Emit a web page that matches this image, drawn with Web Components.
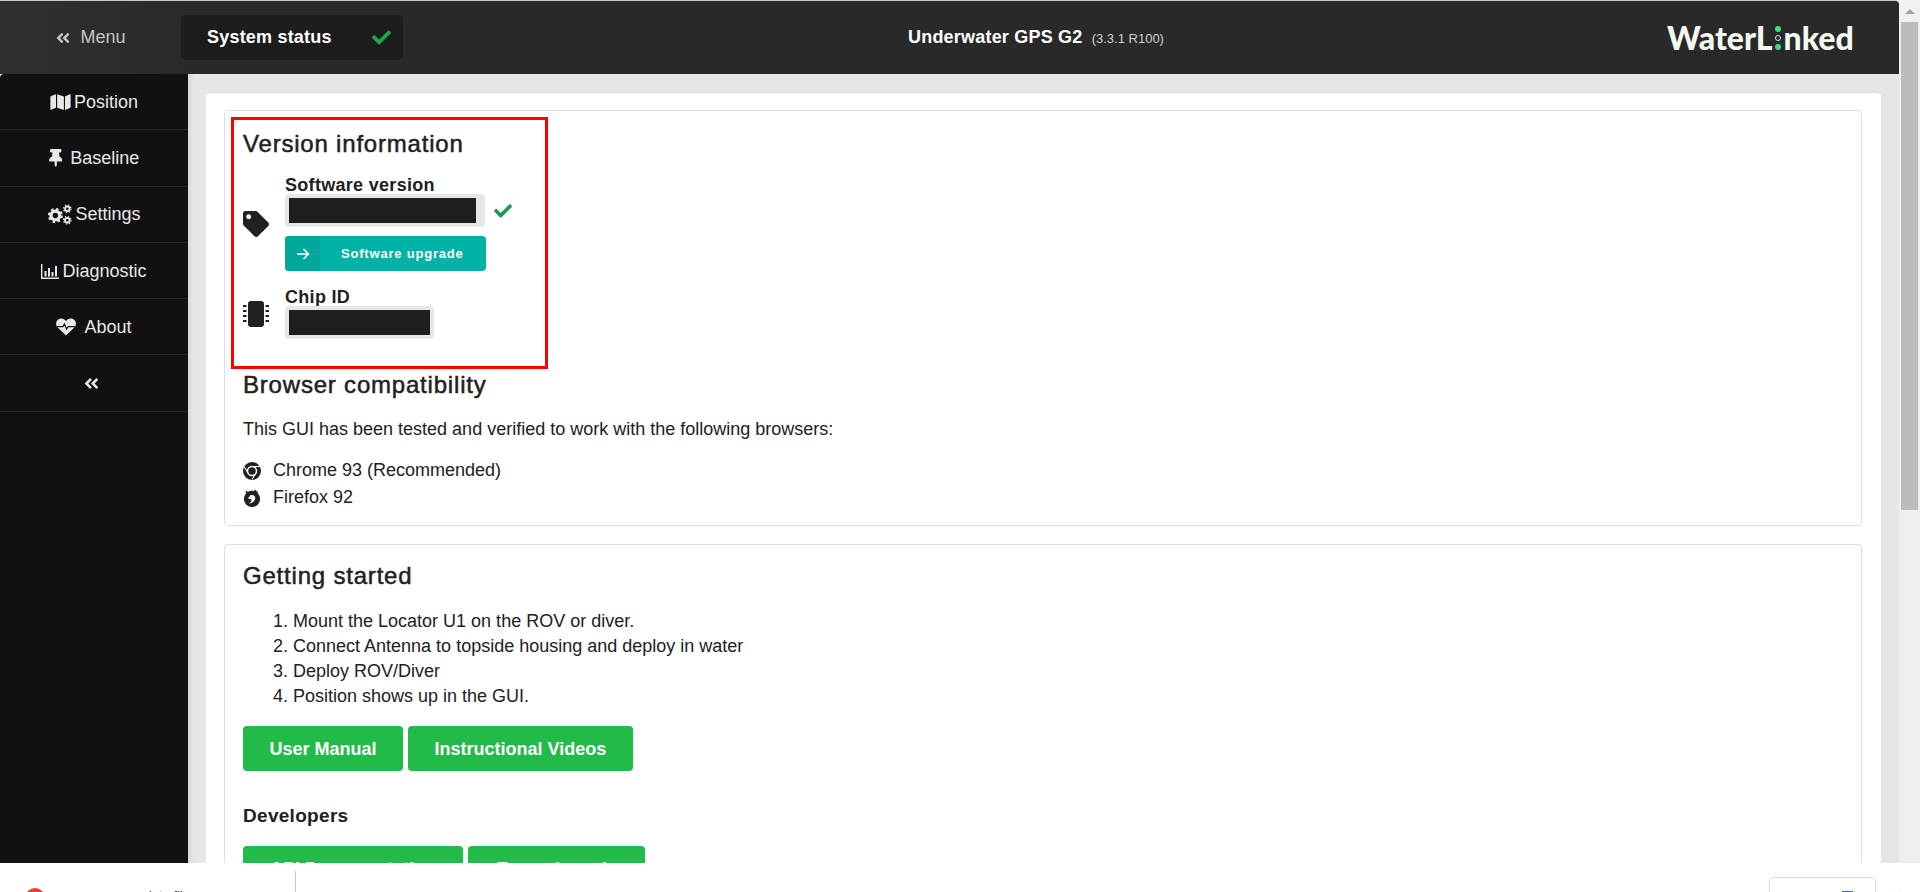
<!DOCTYPE html>
<html>
<head>
<meta charset="utf-8">
<title>Underwater GPS G2</title>
<style>
	html, body { margin: 0; height: 100%; overflow: hidden; background: #fff; }
	body { font-family: "Liberation Sans", Arial, sans-serif; color: #212121; }
</style>
</head>
<body>

<template id="app-shell-tpl">
	<style>
		:host { display: flex; flex-direction: column; width: 1920px; height: 892px; }
		.window { display: flex; height: 863px; flex: none; overflow: hidden; }
		.app { width: 1899px; flex: none; display: flex; flex-direction: column; }
		.body { display: flex; flex: 1; min-height: 0; }
	</style>
	<div class="window">
		<div class="app">
			<slot name="header"></slot>
			<div class="body">
				<slot name="nav"></slot>
				<slot name="main"></slot>
			</div>
		</div>
		<fake-scrollbar></fake-scrollbar>
	</div>
	<slot name="bottom"></slot>
</template>

<template id="top-bar-tpl">
	<style>
		:host { display: flex; align-items: center; height: 73px; flex: none; background: linear-gradient(90deg, #303030 0, #292929 190px); border-top: 1px solid #c8c8c8; border-top-right-radius: 4px; color: #fff; }
		.menu { width: 181px; display: flex; justify-content: center; align-items: center; gap: 9px; color: #c4c4c4; font-size: 18px; }
		.menu svg { width: 16px; height: 16px; fill: #c4c4c4; }
		.status { width: 222px; height: 45px; box-sizing: border-box; border-radius: 5px; background: #1c1c1c; display: flex; align-items: center; justify-content: space-between; padding: 0 12px 0 26px; font-weight: bold; font-size: 18px; letter-spacing: .2px; }
		.status svg { width: 19px; height: 19px; fill: #1fa64e; }
		.title { flex: 1; text-align: center; font-weight: bold; font-size: 18px; letter-spacing: .2px; padding-left: 2px; }
		.title small { font-weight: normal; font-size: 13px; letter-spacing: 0; color: #cfcfcf; margin-left: 4px; }
		.logo { width: 232px; box-sizing: border-box; font-family: Lato, sans-serif; font-weight: 900; font-size: 32px; color: #f2f9ee; display: flex; align-items: center; }
		.dots { display: inline-flex; flex-direction: column; justify-content: space-between; align-items: center; height: 24px; width: 7px; margin: 0 2px; }
		.dots i { width: 6px; height: 6px; border-radius: 50%; background: #3ddc84; }
		.dots i.o { background: none; border: 1px solid #ddd; width: 4px; height: 4px; }
	</style>
	<div class="menu"><svg viewBox="0 0 448 512"><path d="M223.7 239l136-136c9.4-9.4 24.6-9.4 33.9 0l22.6 22.6c9.4 9.4 9.4 24.6 0 33.9L319.9 256l96.4 96.4c9.4 9.4 9.4 24.6 0 33.9L393.7 409c-9.4 9.4-24.6 9.4-33.9 0l-136-136c-9.5-9.4-9.5-24.6-.1-34zm-192 34l136 136c9.4 9.4 24.6 9.4 33.9 0l22.6-22.6c9.4-9.4 9.4-24.6 0-33.9L127.9 256l96.4-96.4c9.4-9.4 9.4-24.6 0-33.9L201.7 103c-9.4-9.4-24.6-9.4-33.9 0l-136 136c-9.5 9.4-9.5 24.6-.1 34z"/></svg>Menu</div>
	<div class="status">System status<svg viewBox="0 0 512 512"><path d="M173.898 439.404l-166.4-166.4c-9.997-9.997-9.997-26.206 0-36.204l36.203-36.204c9.997-9.998 26.207-9.998 36.204 0L192 312.69 432.095 72.596c9.997-9.997 26.207-9.997 36.204 0l36.203 36.204c9.997 9.997 9.997 26.206 0 36.204l-294.4 294.401c-9.998 9.997-26.207 9.997-36.204-.001z"/></svg></div>
	<div class="title">Underwater GPS G2 <small>(3.3.1 R100)</small></div>
	<div class="logo">WaterL<span class="dots"><i></i><i class="o"></i><i></i></span>nked</div>
</template>

<template id="side-nav-tpl">
	<style>
		:host { display: block; width: 188px; flex: none; background: #111; border-top-left-radius: 4px; }
	</style>
	<slot></slot>
</template>

<template id="nav-item-tpl">
	<style>
		:host { display: flex; height: 56.3px; box-sizing: border-box; padding-top: 1px; border-bottom: 1px solid #262626; align-items: center; justify-content: center; gap: 3px; color: #e8e8e8; font-size: 18px; }
		::slotted(svg) { height: 18px; fill: #e8e8e8; }
	</style>
	<slot name="icon"></slot><slot></slot>
</template>

<template id="panel-card-tpl">
	<style>
		:host { display: block; background: #fff; border: 1px solid #dedede; border-radius: 4px; box-sizing: border-box; }
	</style>
	<slot></slot>
</template>

<template id="info-field-tpl">
	<style>
		:host { display: flex; align-items: center; }
		.icon { width: 42px; flex: none; display: flex; }
		.label { font-weight: bold; font-size: 18px; letter-spacing: .3px; line-height: 18px; }
		.row { display: flex; align-items: center; gap: 9px; }
		.box { background: #e6e6e6; border-radius: 4px; height: 33px; box-sizing: border-box; padding: 4px; display: flex; align-items: center; }
		.mask { background: #1e1e1e; height: 100%; }
	</style>
	<div class="icon"><slot name="icon"></slot></div>
	<div>
		<div class="label"><slot name="label"></slot></div>
		<div class="row">
			<div class="box"><div class="mask"></div></div>
			<slot name="state"></slot>
		</div>
		<slot name="action"></slot>
	</div>
</template>

<template id="upgrade-button-tpl">
	<style>
		:host { display: flex; width: 201px; height: 35px; margin-top: 9px; background: #00b3a6; border-radius: 4px; overflow: hidden; color: #fff; font-weight: bold; font-size: 13px; letter-spacing: .8px; align-items: center; }
		.ar { width: 35px; height: 100%; background: #00a89c; display: flex; align-items: center; justify-content: center; }
		.ar svg { width: 16px; height: 16px; }
		.tx { margin-left: 21px; }
	</style>
	<div class="ar"><svg viewBox="0 0 16 16" fill="none" stroke="#fff" stroke-width="1.6"><path d="M2 8h11M8.500 3l5 5-5 5"/></svg></div>
	<div class="tx"><slot></slot></div>
</template>

<template id="green-button-tpl">
	<style>
		:host { display: inline-flex; align-items: center; justify-content: center; height: 45px; box-sizing: border-box; padding-top: 1px; background: #22bb4a; border-radius: 4px; color: #fff; font-weight: bold; font-size: 18px; padding-left: 26.500px; padding-right: 26.500px; }
	</style>
	<slot></slot>
</template>

<template id="fake-scrollbar-tpl">
	<style>
		:host { display: flex; flex-direction: column; width: 21px; flex: none; background: #efefef; }
		.up { height: 22px; display: flex; align-items: center; justify-content: center; background: #f1f1f1; }
		.up i { border: 5px solid transparent; border-top: 0; border-bottom: 5px solid #a3a3a3; }
		.thumb { height: 488px; margin: 0 2px; background: #bcbcbc; }
	</style>
	<div class="up"><i></i></div>
	<div class="thumb"></div>
</template>

<template id="download-bar-tpl">
	<style>
		:host { display: flex; height: 29px; flex: none; background: #fff; overflow: hidden; }
		.item { width: 296px; height: 40px; box-sizing: border-box; display: flex; padding: 17px 0 0 25px; border-right: 1px solid #c8c8c8; margin-top: 8px; }
		.dot { width: 20px; height: 20px; border-radius: 50%; background: #ea4335; flex: none; }
		.name { font-size: 13px; line-height: 15px; color: #333; margin: 0 0 0 85px; }
		.all { margin-left: auto; margin-top: 14px; width: 107px; height: 40px; box-sizing: border-box; border: 1px solid #dadce0; border-radius: 4px; color: #1a73e8; font-size: 13px; line-height: 15px; padding: 11px 0 0 26px; display: flex; gap: 0; }
		.all i { width: 11px; height: 11px; background: #1a73e8; margin: 2px 0 0 -3px; }
		.x { width: 44px; flex: none; text-align: center; color: #888; font-size: 16px; padding-top: 24px; }
	</style>
	<div class="item"><div class="dot"></div><div class="name">update file</div></div>
	<div class="all">Show all<i></i></div>
	<div class="x">&times;</div>
</template>

<script>
	(function() {
		function simple(tag, tplId) {
			class El extends HTMLElement {
				constructor() {
					super();
					const shadow = this.attachShadow({mode: 'open'});
					shadow.appendChild(document.getElementById(tplId).content.cloneNode(true));
				}
			}
			customElements.define(tag, El);
		}

		simple('fake-scrollbar', 'fake-scrollbar-tpl');
		simple('app-shell', 'app-shell-tpl');
		simple('top-bar', 'top-bar-tpl');
		simple('side-nav', 'side-nav-tpl');
		simple('nav-item', 'nav-item-tpl');
		simple('panel-card', 'panel-card-tpl');
		simple('upgrade-button', 'upgrade-button-tpl');
		simple('green-button', 'green-button-tpl');
		simple('download-bar', 'download-bar-tpl');

		class InfoField extends HTMLElement {
			constructor() {
				super();
				const shadow = this.attachShadow({mode: 'open'});
				shadow.appendChild(document.getElementById('info-field-tpl').content.cloneNode(true));
			}

			connectedCallback() {
				// box and redaction widths come from attributes
				this.shadowRoot.querySelector('.box').style.width = this.getAttribute('box') + 'px';
				this.shadowRoot.querySelector('.mask').style.width = this.getAttribute('mask') + 'px';
			}
		}
		customElements.define('info-field', InfoField);

		class MainView extends HTMLElement {
			constructor() {
				super();
				const shadow = this.attachShadow({mode: 'open'});
				shadow.innerHTML = `
					<style>
						:host { display: block; flex: 1; min-width: 0; overflow: hidden; background: linear-gradient(90deg, #d8d8d8 0, #e6e6e6 6px); padding: 18px 18px 0; box-sizing: border-box; }
						.outer { background: #fff; border-top: 1px solid #dedede; border-radius: 4px 4px 0 0; padding: 17px 19px 0 18px; height: 900px; box-sizing: border-box; }
					</style>
					<div class="outer"><slot></slot></div>`;
			}
		}
		customElements.define('main-view', MainView);

		class VersionBlock extends HTMLElement {
			constructor() {
				super();
				const shadow = this.attachShadow({mode: 'open'});
				shadow.innerHTML = `
					<style>
						:host { display: block; width: 317px; height: 252px; box-sizing: border-box; border: 3px solid #f00; margin: 6px 0 0 6px; padding: 10px 0 0 9px; }
						h3 { font-size: 24px; font-weight: normal; letter-spacing: .8px; -webkit-text-stroke: .5px #212121; margin: 0 0 18px; line-height: 28px; }
					</style>
					<h3>Version information</h3>
					<slot></slot>`;
			}
		}
		customElements.define('version-block', VersionBlock);

		class BrowserNotes extends HTMLElement {
			constructor() {
				super();
				const shadow = this.attachShadow({mode: 'open'});
				shadow.innerHTML = `
					<style>
						:host { display: block; padding: 0 0 0 18px; font-size: 18px; }
						h3 { font-size: 24px; font-weight: normal; letter-spacing: .8px; -webkit-text-stroke: .5px #212121; margin: 2px 0 18px; line-height: 28px; }
						p { margin: 0 0 16px; line-height: 24px; }
						.b { display: flex; align-items: center; height: 27px; gap: 12px; }
						svg { width: 18px; height: 18px; flex: none; }
					</style>
					<h3>Browser compatibility</h3>
					<p>This GUI has been tested and verified to work with the following browsers:</p>
					<div class="b"><svg viewBox="0 0 20 20"><circle cx="10" cy="10" r="10" fill="#212121"/><circle cx="10" cy="10" r="5" fill="none" stroke="#fff" stroke-width="1.6"/><circle cx="10" cy="10" r="3" fill="#212121"/><path d="M10 5h9M5.700 12.500L1.500 5.500M14.300 12.500L10 19.500" stroke="#fff" stroke-width="1.2"/></svg>Chrome 93 (Recommended)</div>
					<div class="b"><svg viewBox="0 0 20 20"><circle cx="10" cy="11" r="9" fill="#212121"/><path d="M2.500 2l2 5 3-3zM12.500 0l1 5 3.500-1z" fill="#212121"/><path d="M8 7c3.500-1 6.500 1 5.500 4.500-1 2.500-3.500 5-7 4.500 2.500-1 3.500-3 2.500-4.500l-3.500-1C6 9.500 7.500 8.500 8 7z" fill="#fff"/></svg>Firefox 92</div>`;
			}
		}
		customElements.define('browser-notes', BrowserNotes);

		class GettingStarted extends HTMLElement {
			constructor() {
				super();
				const shadow = this.attachShadow({mode: 'open'});
				shadow.innerHTML = `
					<style>
						:host { display: block; margin-top: 18px; background: #fff; border: 1px solid #dedede; border-radius: 4px; padding: 17px 18px 0; height: 600px; box-sizing: border-box; }
						h3 { font-size: 24px; font-weight: normal; letter-spacing: .8px; -webkit-text-stroke: .5px #212121; margin: 0 0 19px; line-height: 28px; }
						ol { margin: 0 0 17px; padding-left: 50px; font-size: 18px; }
						li { height: 25px; line-height: 25px; }
						h4 { font-size: 19px; font-weight: bold; margin: 34px 0 19px; line-height: 22px; letter-spacing: .3px; }
						.btns { display: flex; gap: 5px; }
					</style>
					<h3>Getting started</h3>
					<ol>
						<li>Mount the Locator U1 on the ROV or diver.</li>
						<li>Connect Antenna to topside housing and deploy in water</li>
						<li>Deploy ROV/Diver</li>
						<li>Position shows up in the GUI.</li>
					</ol>
					<div class="btns"><green-button>User Manual</green-button><green-button>Instructional Videos</green-button></div>
					<h4>Developers</h4>
					<div class="btns"><green-button style="padding-left:27px;padding-right:27px">API Documentation</green-button><green-button style="padding-left:28px;padding-right:28px">Example code</green-button></div>`;
			}
		}
		customElements.define('getting-started', GettingStarted);
	})();
</script>

<app-shell>
	<top-bar slot="header"></top-bar>
	<side-nav slot="nav">
		<nav-item><svg slot="icon" viewBox="0 0 576 512" style="width:21px"><path d="M0 117.66v346.32c0 11.32 11.43 19.06 21.94 14.86L160 416V32L20.12 87.95A32.006 32.006 0 0 0 0 117.66zM192 416l192 64V96L192 32v384zM554.06 33.16L416 96v384l139.88-55.95A31.996 31.996 0 0 0 576 394.34V48.02c0-11.32-11.43-19.06-21.94-14.86z"/></svg>Position</nav-item>
		<nav-item><svg slot="icon" viewBox="0 0 384 512"><path d="M298.028 214.267L285.793 96H328c13.255 0 24-10.745 24-24V24c0-13.255-10.745-24-24-24H56C42.745 0 32 10.745 32 24v48c0 13.255 10.745 24 24 24h42.207L85.972 214.267C37.465 236.82 0 277.261 0 328c0 13.255 10.745 24 24 24h136v104.007c0 1.242.289 2.467.845 3.578l24 48c2.941 5.882 11.364 5.893 14.311 0l24-48a8.008 8.008 0 0 0 .845-3.578V352h136c13.255 0 24-10.745 24-24-.001-51.183-37.983-91.42-85.973-113.733z"/></svg>&nbsp;Baseline</nav-item>
		<nav-item><svg slot="icon" viewBox="0 0 24 20" style="width:25px;height:21px"><g fill="none" stroke="#e8e8e8"><circle cx="8" cy="11" r="4.2" stroke-width="3.2"/><circle cx="8" cy="11" r="6.2" stroke-width="2" stroke-dasharray="2.4 2.47"/><circle cx="19.5" cy="4.5" r="2.2" stroke-width="1.8"/><circle cx="19.5" cy="4.5" r="3.6" stroke-width="1.2" stroke-dasharray="1.3 1.53"/><circle cx="19.5" cy="15.5" r="2.2" stroke-width="1.8"/><circle cx="19.5" cy="15.5" r="3.6" stroke-width="1.2" stroke-dasharray="1.3 1.53"/></g></svg>Settings</nav-item>
		<nav-item><svg slot="icon" viewBox="0 0 18 16" style="width:18px;height:16px"><path d="M0 1h1.400v13.600H18V16H0z"/><path d="M3.500 8h2v5.600h-2zM7 5h2v8.600H7zM10.500 9h2v4.600h-2zM14 3h2v10.600h-2z"/></svg>Diagnostic</nav-item>
		<nav-item><svg slot="icon" viewBox="0 0 20 18" style="width:20px;height:18px"><path d="M10 17.500L1.600 9.400C-.4 7.300-.4 4 1.600 2 3.600 0 6.900 0 8.900 2L10 3.100 11.100 2c2-2 5.300-2 7.300 0s2 5.300 0 7.400z"/><path d="M1 8.600h6l1.400-2.600 2.200 5 1.600-2.400H19" fill="none" stroke="#111" stroke-width="1.2"/></svg>&nbsp;About</nav-item>
		<nav-item><svg slot="icon" viewBox="0 0 448 512" style="height:17px;margin-right:5px"><path d="M223.7 239l136-136c9.4-9.4 24.6-9.4 33.9 0l22.6 22.6c9.4 9.4 9.4 24.6 0 33.9L319.9 256l96.4 96.4c9.4 9.4 9.4 24.6 0 33.9L393.7 409c-9.4 9.4-24.6 9.4-33.9 0l-136-136c-9.5-9.4-9.5-24.6-.1-34zm-192 34l136 136c9.4 9.4 24.6 9.4 33.9 0l22.6-22.6c9.4-9.4 9.4-24.6 0-33.9L127.9 256l96.4-96.4c9.4-9.4 9.4-24.6 0-33.9L201.7 103c-9.4-9.4-24.6-9.4-33.9 0l-136 136c-9.5 9.4-9.5 24.6-.1 34z"/></svg></nav-item>
	</side-nav>
	<main-view slot="main">
		<panel-card style="height:416px">
			<version-block>
				<info-field box="200" mask="187">
					<svg slot="icon" width="26" height="26" viewBox="0 0 512 512" fill="#212121"><path d="M0 252.118V48C0 21.49 21.49 0 48 0h204.118a48 48 0 0 1 33.941 14.059l211.882 211.882c18.745 18.745 18.745 49.137 0 67.882L293.823 497.941c-18.745 18.745-49.137 18.745-67.882 0L14.059 286.059A48 48 0 0 1 0 252.118zM112 64c-26.51 0-48 21.49-48 48s21.49 48 48 48 48-21.49 48-48-21.49-48-48-48z"/></svg>
					<span slot="label">Software version</span>
					<svg slot="state" width="18" height="18" viewBox="0 0 512 512" fill="#1a9c4e"><path d="M173.898 439.404l-166.4-166.4c-9.997-9.997-9.997-26.206 0-36.204l36.203-36.204c9.997-9.998 26.207-9.998 36.204 0L192 312.69 432.095 72.596c9.997-9.997 26.207-9.997 36.204 0l36.203 36.204c9.997 9.997 9.997 26.206 0 36.204l-294.4 294.401c-9.998 9.997-26.207 9.997-36.204-.001z"/></svg>
					<upgrade-button slot="action">Software upgrade</upgrade-button>
				</info-field>
				<info-field box="149" mask="141" style="margin-top:17px">
					<svg slot="icon" width="26" height="26" viewBox="0 0 26 26" fill="#212121"><rect x="5" y="0" width="16" height="26" rx="3"/><path d="M0 4h3.500v2H0zM0 9h3.500v2H0zM0 14h3.500v2H0zM0 19h3.500v2H0zM22.500 4H26v2h-3.500zM22.500 9H26v2h-3.500zM22.500 14H26v2h-3.500zM22.500 19H26v2h-3.500z"/></svg>
					<span slot="label">Chip ID</span>
				</info-field>
			</version-block>
			<browser-notes></browser-notes>
		</panel-card>
		<getting-started></getting-started>
	</main-view>
	<download-bar slot="bottom"></download-bar>
</app-shell>
</body>
</html>
